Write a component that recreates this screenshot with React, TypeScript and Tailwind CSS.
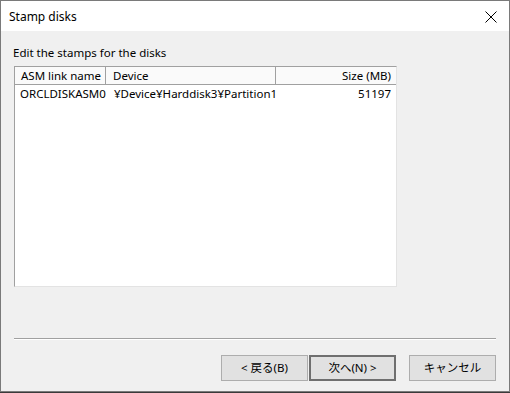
import React from 'react';

const font = { fontFamily: '"Segoe UI", "Noto Sans", "Noto Sans CJK JP", sans-serif' };

const Btn: React.FC<{ label: string; isDefault?: boolean; className?: string }> = ({ label, isDefault, className }) => (
  <button
    className={
      'h-[26px] w-[87px] bg-[#e1e1e1] text-[11.5px] text-black leading-none ' +
      (isDefault ? 'border-2 border-[#6f6f6f] ' : 'border border-[#adadad] ') +
      (className ?? '')
    }
  >
    {label}
  </button>
);

export default function App() {
  return (
    <div className="w-[510px] h-[393px] bg-[#3a3a3a]" style={font}>
      <div className="w-[510px] h-[392px] border border-[#7a7a7a] flex flex-col bg-[#f0f0f0]">
        {/* title bar */}
        <div className="h-[30px] bg-white flex items-center justify-between pl-[8px] pr-[11px] pt-[2px]">
          <span className="text-[12px] text-black">Stamp disks</span>
          <svg width="12" height="12" viewBox="0 0 12 12" className="mr-[1px]">
            <path d="M0.5 0.5 L11.5 11.5 M11.5 0.5 L0.5 11.5" stroke="#000" strokeWidth="1" />
          </svg>
        </div>

        {/* body */}
        <div className="flex-1 flex flex-col pl-[12px] pr-[13px] pt-[14px]">
          <div className="text-[11.5px] leading-[16px] text-black">Edit the stamps for the disks</div>

          <div className="mt-[5px] ml-[1px] w-[383px] h-[221px] bg-white border border-t-[#a0a0a0] border-l-[#a0a0a0] border-r-[#e3e3e3] border-b-[#e3e3e3]">
            <div className="flex h-[18px] text-[11.5px] text-black border-b border-[#a0a0a0] bg-[#fafafa]">
              <div className="w-[91px] pl-[6px] border-r border-[#a0a0a0] leading-[17px]">ASM link name</div>
              <div className="w-[170px] pl-[7px] border-r border-[#a0a0a0] leading-[17px]">Device</div>
              <div className="flex-1 pr-[5px] text-right leading-[17px]">Size (MB)</div>
            </div>
            <div className="flex h-[17px] text-[11.5px] text-black leading-[17px]">
              <div className="w-[92px] pl-[5px] whitespace-nowrap">ORCLDISKASM0</div>
              <div className="w-[170px] pl-[7px] whitespace-nowrap">¥Device¥Harddisk3¥Partition1</div>
              <div className="flex-1 pr-[5px] text-right">51197</div>
            </div>
          </div>

          <div className="mt-[51px] ml-[1px] h-[2px] border-t border-[#a0a0a0] border-b border-b-white w-[482px]" />

          <div className="mt-[15px] flex justify-end">
            <Btn label="< 戻る(B)" />
            <Btn label="次へ(N) >" isDefault className="ml-[1px]" />
            <Btn label="キャンセル" className="ml-[13px]" />
          </div>
        </div>
      </div>
    </div>
  );
}
